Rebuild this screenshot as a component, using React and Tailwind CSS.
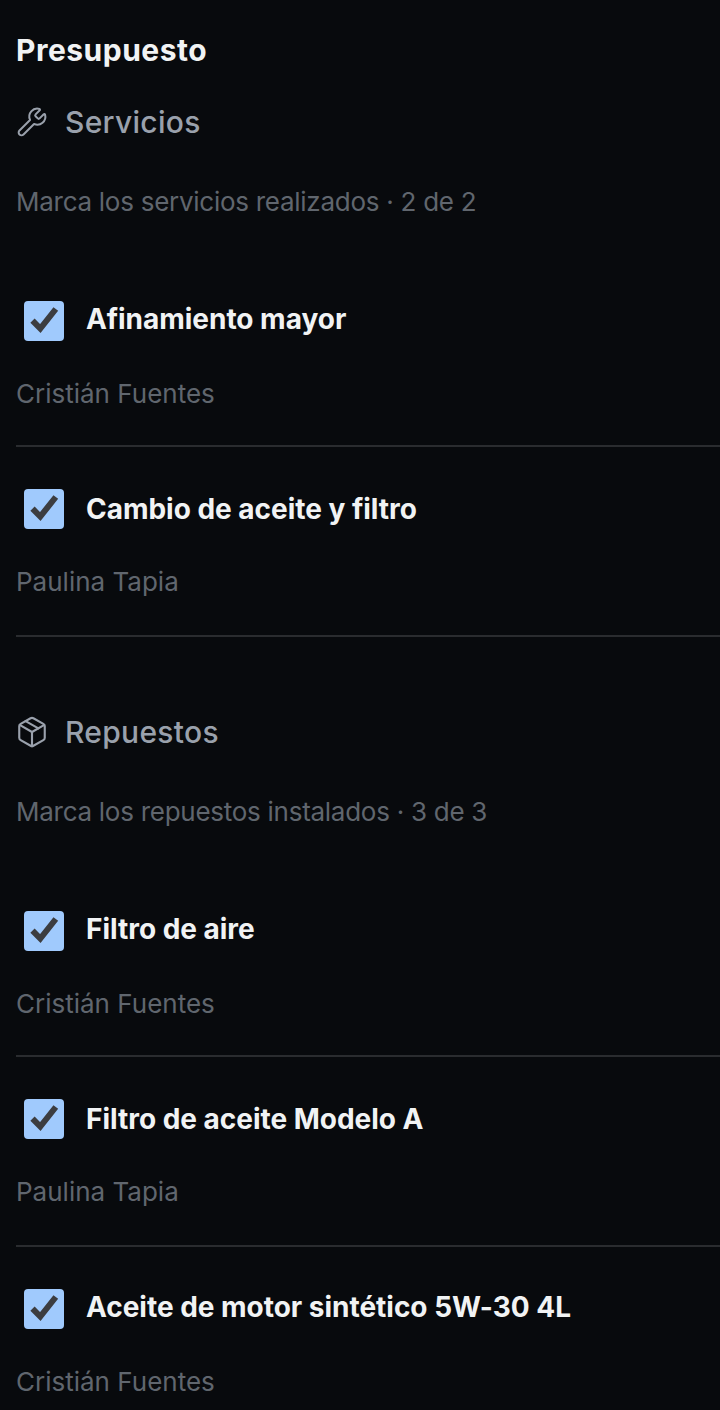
import { Wrench, Package } from 'lucide-react';

const sections = [
  {
    title: 'Servicios', icon: Wrench, size: 32, iconCls: 'text-[#9aa1ac]', hint: 'Marca los servicios realizados · 2 de 2',
    items: [
      { name: 'Afinamiento mayor', who: 'Cristián Fuentes', row: 'h-[189px] border-b-2 border-[#2a2c2f] pt-[43px]', nudge: '-mt-[4px]' },
      { name: 'Cambio de aceite y filtro', who: 'Paulina Tapia', row: 'h-[190px] border-b-2 border-[#2a2c2f] pt-[42px]', nudge: '' },
    ],
  },
  {
    title: 'Repuestos', icon: Package, size: 34, iconCls: 'text-[#9aa1ac] -mx-px', hint: 'Marca los repuestos instalados · 3 de 3',
    items: [
      { name: 'Filtro de aire', who: 'Cristián Fuentes', row: 'h-[189px] border-b-2 border-[#2a2c2f] pt-[43px]', nudge: '-mt-[4px]' },
      { name: 'Filtro de aceite Modelo A', who: 'Paulina Tapia', row: 'h-[190px] border-b-2 border-[#2a2c2f] pt-[42px]', nudge: '' },
      { name: 'Aceite de motor sintético 5W-30 4L', who: 'Cristián Fuentes', row: 'h-[150px] pt-[42px]', nudge: '-mt-[4px]' },
    ],
  },
];

function Check() {
  return (
    <div className="w-10 h-10 rounded-[4px] bg-[#a0cafd] flex items-center justify-center shrink-0">
      <svg width="40" height="40" viewBox="0 0 40 40" fill="none">
        <path d="M8.5 19.7L16.3 27.5L31.8 8" stroke="#3c3d40" strokeWidth="6" />
      </svg>
    </div>
  );
}

export default function App() {
  return (
    <div className="h-[1410px] overflow-hidden bg-[#080a0d] pl-4 pt-[28px] font-['Inter',sans-serif]">
      <h1 className="text-[30px] leading-[44px] font-bold text-[#f1f3f4] tracking-[0.5px]">Presupuesto</h1>
      {sections.map((s, i) => (
        <section key={s.title} className={i ? 'mt-[73px]' : 'mt-[28px]'}>
          <div className="flex items-center gap-[17px] h-[44px]">
            <s.icon size={s.size} strokeWidth={1.5} className={s.iconCls} />
            <h2 className="text-[30px] font-medium text-[#9aa1ac] tracking-[0.3px]">{s.title}</h2>
          </div>
          <p className="mt-[40px] text-[26px] leading-[36px] text-[#60666e] tracking-[-0.27px]">{s.hint}</p>
          <div className="mt-[38px]">
            {s.items.map(it => (
              <div key={it.name} className={it.row}>
                <div className="flex items-center gap-[22px] pl-2">
                  <Check />
                  <div className={`text-[28px] leading-[36px] font-bold text-[#f1f3f4] tracking-[-0.02px] ${it.nudge}`}>{it.name}</div>
                </div>
                <div className="mt-[35px] text-[26px] leading-[36px] text-[#60666e]">{it.who}</div>
              </div>
            ))}
          </div>
        </section>
      ))}
    </div>
  );
}
